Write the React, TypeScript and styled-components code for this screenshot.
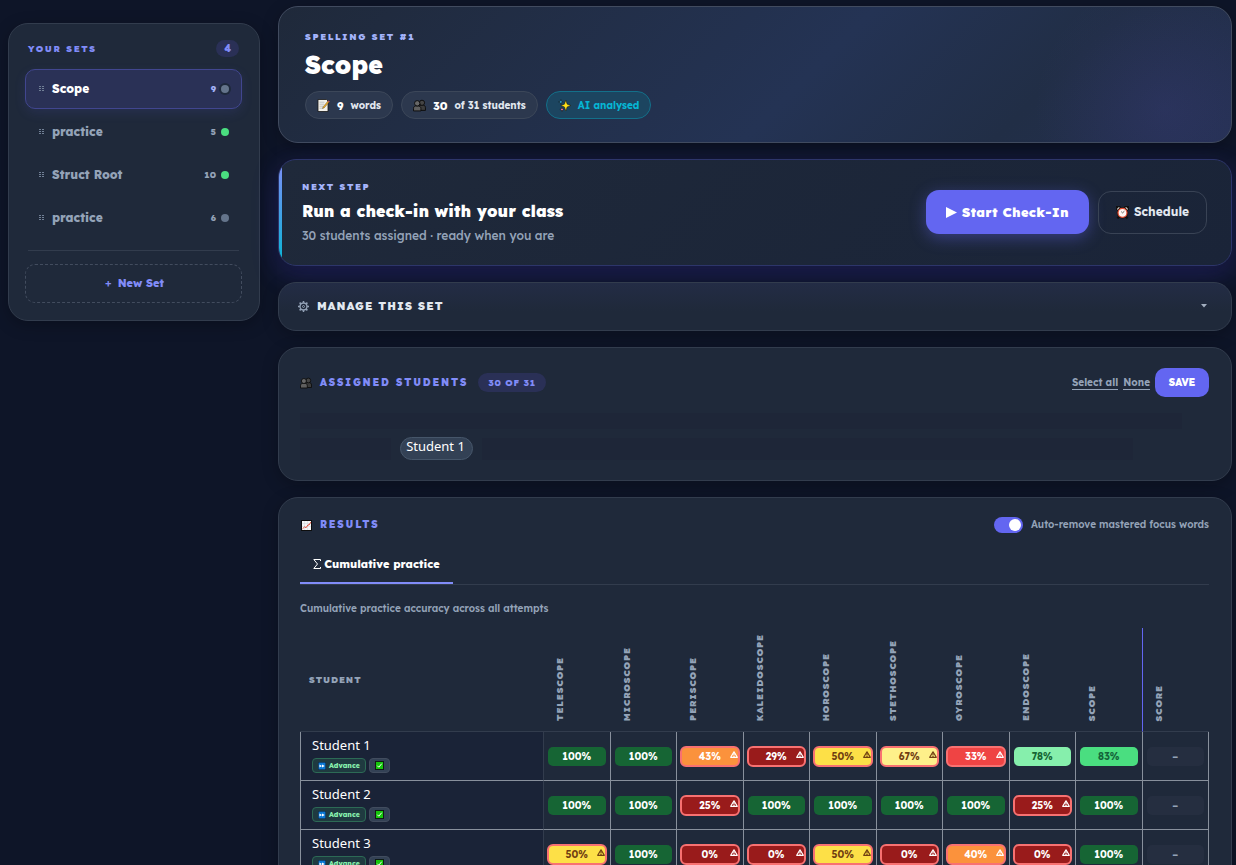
import React from "react";
import styled, { createGlobalStyle, css } from "styled-components";

const GlobalStyle = createGlobalStyle`
  *, *::before, *::after { box-sizing: border-box; }
  html, body { margin: 0; background: #0e1528; }
  body {
    font-family: "Lexend", "Inter", "Liberation Sans", sans-serif;
    color: #fff;
    font-size: 12px;
    line-height: 16px;
  }
  button, input { font: inherit; color: inherit; }
  button { cursor: pointer; margin: 0; }
  h1, h2, h3, p, ul { margin: 0; padding: 0; }
  svg { display: block; flex: none; }
`;

/* ---------- page ---------- */

const Page = styled.div`
  display: grid;
  grid-template-columns: 252px minmax(0, 1fr);
  column-gap: 18px;
  align-items: start;
  height: 100vh;
  overflow: hidden;
  padding: 6px 4px 0 8px;
  background: #0e1528;
`;

const Main = styled.main`
  display: flex;
  flex-direction: column;
  gap: 16px;
`;

const Card = styled.section`
  border: 1px solid #323c4d;
  border-radius: 20px;
  background: #1f293a;
  box-shadow: 0 4px 16px rgba(0, 0, 0, 0.25);
`;

const Row = styled.div<{ $gap?: number }>`
  display: flex;
  align-items: center;
  gap: ${(p) => p.$gap ?? 8}px;
`;

/* ---------- sidebar ---------- */

const Sidebar = styled(Card).attrs({ as: "aside" })`
  margin-top: 17px;
  padding: 16px 17px 17px 16px;
`;

const SidebarHead = styled.div`
  display: flex;
  align-items: center;
  justify-content: space-between;
  padding: 0 3px;
  margin-bottom: 12px;
`;

const Eyebrow = styled.h2<{ $tone?: string }>`
  font-size: 9px;
  line-height: 12px;
  font-weight: 900;
  letter-spacing: 0.18em;
  text-transform: uppercase;
  color: ${(p) => p.$tone ?? "#818cf8"};
`;

const SectionTitle = styled(Eyebrow)`
  font-size: 10px;
`;

const CountBadge = styled.span<{ $wide?: boolean }>`
  display: inline-flex;
  align-items: center;
  height: ${(p) => (p.$wide ? 19 : 17)}px;
  padding: 0 ${(p) => (p.$wide ? 10 : 8)}px;
  border-radius: 10px;
  background: #2a3056;
  color: #818cf8;
  font-size: ${(p) => (p.$wide ? 9 : 10)}px;
  font-weight: 800;
  letter-spacing: ${(p) => (p.$wide ? "0.08em" : "0")};
`;

const SetList = styled.ul`
  list-style: none;
  display: flex;
  flex-direction: column;
  gap: 3px;
`;

const SetItem = styled.button<{ $active?: boolean }>`
  display: flex;
  align-items: center;
  gap: 7px;
  width: 100%;
  height: 40px;
  padding: 0 12px 0 13px;
  border: 1px solid ${(p) => (p.$active ? "#41468f" : "transparent")};
  border-radius: 10px;
  background: ${(p) => (p.$active ? "#2a3156" : "transparent")};
  box-shadow: ${(p) => (p.$active ? "0 4px 12px rgba(99, 102, 241, 0.12)" : "none")};
  color: ${(p) => (p.$active ? "#fff" : "#94a3b8")};
  font-size: 12px;
  font-weight: 800;
  text-align: left;
`;

const SetName = styled.span`
  flex: 1;
`;

const SetCount = styled.span<{ $active?: boolean }>`
  font-size: 9px;
  font-weight: 800;
  color: ${(p) => (p.$active ? "#a5b4fc" : "#94a3b8")};
`;

const Dot = styled.span<{ $on?: boolean; $active?: boolean }>`
  width: 8px;
  height: 8px;
  margin-left: -2px;
  border-radius: 50%;
  background: ${(p) => (p.$on ? "#4ade80" : "#64748b")};
  box-shadow: ${(p) => (p.$active ? "0 0 0 2px #1e293b" : "none")};
`;

const Divider = styled.hr`
  margin: 12px 3px 13px;
  border: 0;
  border-top: 1px solid #323c4d;
`;

const NewSet = styled.button`
  display: flex;
  align-items: center;
  justify-content: center;
  gap: 6px;
  width: 100%;
  height: 39px;
  padding: 0 0 2px 2px;
  border: 1px dashed #424c5e;
  border-radius: 10px;
  background: transparent;
  color: #818cf8;
  font-size: 11px;
  font-weight: 800;
`;

const Plus = styled.span`
  font-weight: 500;
`;

/* ---------- hero ---------- */

const Hero = styled(Card)`
  padding: 24px 26px 23px;
  border-color: #414b5f;
  background:
    radial-gradient(circle at 93% 75%, rgba(99, 80, 210, 0.12), transparent 130px),
    linear-gradient(135deg, #1f293a 0%, #243354 55%, #212e46 78%, #243050 100%);
`;

const HeroTitle = styled.h1`
  margin: 4px 0 8px;
  font-size: 25px;
  line-height: 36px;
  font-weight: 900;
`;

const Stat = styled.span<{ $ai?: boolean }>`
  display: inline-flex;
  align-items: center;
  gap: 7px;
  height: 28px;
  padding: 1px 11px 0;
  border: 1px solid ${(p) => (p.$ai ? "#13708a" : "#3c4759")};
  border-radius: 14px;
  background: ${(p) => (p.$ai ? "#1c4560" : "#2c384e")};
  color: ${(p) => (p.$ai ? "#06b6d4" : "#e2e8f0")};
  font-size: 10px;
  font-weight: 700;
  white-space: nowrap;

  b { font-size: 11px; font-weight: 800; color: #fff; }
`;

/* ---------- next step ---------- */

const NextStep = styled(Card)`
  display: flex;
  align-items: center;
  justify-content: space-between;
  overflow: hidden;
  padding-right: 24px;
  height: 107px;
  border-color: #2d356a;
  border-radius: 18px;
  background: linear-gradient(135deg, #1f293a, #1a2438);
`;

const NextGlow = styled.div`
  border-radius: 18px;
  box-shadow: 0 8px 26px rgba(79, 70, 229, 0.3);
`;

const NextText = styled.div`
  align-self: stretch;
  padding: 21px 0 0 20px;
  border-left: 3px solid;
  border-image: linear-gradient(#818cf8, #06b6d4) 1;
`;

const NextTitle = styled.h3`
  margin: 6px 0 5px;
  font-size: 16px;
  line-height: 24px;
  font-weight: 900;
`;

const Muted = styled.p`
  font-size: 12px;
  line-height: 16px;
  font-weight: 500;
  color: #94a3b8;
`;

const Actions = styled(Row)`
  padding-bottom: 1px;
`;

const buttonBase = css`
  display: inline-flex;
  align-items: center;
  justify-content: center;
  gap: 5px;
  border: 0;
  white-space: nowrap;
`;

const StartButton = styled.button`
  ${buttonBase}
  min-width: 163px;
  height: 44px;
  padding: 0;
  border-radius: 13px;
  background: #6366f1;
  box-shadow: 0 4px 16px rgba(99, 102, 241, 0.4);
  font-size: 13px;
  font-weight: 900;
  letter-spacing: 0.02em;
`;

const ScheduleButton = styled.button`
  ${buttonBase}
  min-width: 109px;
  height: 43px;
  border: 1px solid #394355;
  border-radius: 13px;
  background: transparent;
  color: #e2e8f0;
  font-size: 12px;
  font-weight: 700;
`;

/* ---------- manage ---------- */

const Manage = styled(Card).attrs({ as: "button" })`
  display: flex;
  align-items: center;
  gap: 8px;
  width: 100%;
  height: 49px;
  padding: 0 24px 1px 19px;
  border-radius: 18px;
  background: linear-gradient(#232c45, #1f293a 60%);
`;

const ManageLabel = styled.span`
  flex: 1;
  text-align: left;
  font-size: 11px;
  font-weight: 900;
  letter-spacing: 0.1em;
  text-transform: uppercase;
  color: #e2e8f0;
`;

/* ---------- assigned students ---------- */

const Assigned = styled(Card)`
  padding: 20px 22px 20px 21px;
`;

const CardHead = styled.div`
  display: flex;
  align-items: center;
  justify-content: space-between;
`;

const TextLink = styled.a`
  border-bottom: 1px solid currentColor;
  line-height: 13px;
  font-size: 10px;
  font-weight: 700;
  color: #94a3b8;
  text-decoration: none;
`;

const SaveButton = styled.button`
  ${buttonBase}
  width: 54px;
  height: 29px;
  border-radius: 10px;
  background: #6366f1;
  font-size: 10px;
  font-weight: 900;
`;

const ChipArea = styled.div`
  display: flex;
  flex-direction: column;
  gap: 8px;
  margin-top: 16px;
`;

const ChipRow = styled.div`
  display: flex;
  align-items: center;
  gap: 9px;
  padding-right: 76px;
`;

const Hidden = styled.div<{ $kind: "line" | "short" | "rest" }>`
  background: #1e2638;
  ${(p) => p.$kind === "line" && css`height: 16px; margin-right: 27px;`}
  ${(p) => p.$kind === "short" && css`height: 22px; width: 91px;`}
  ${(p) => p.$kind === "rest" && css`height: 22px; flex: 1;`}
`;

const nameFont = css`
  font-family: "Noto Sans", "Open Sans", sans-serif;
  font-size: 13px;
  line-height: 16px;
  font-weight: 400;
  color: #fff;
`;

const Chip = styled.button`
  ${nameFont}
  width: 73px;
  height: 23px;
  padding: 0 2px 5px 0;
  border: 1px solid #46566a;
  border-radius: 12px;
  background: #334155;
`;

/* ---------- results ---------- */

const Results = styled(Card)`
  padding: 19px 22px 24px 21px;
`;

const SwitchLabel = styled.label`
  display: flex;
  align-items: center;
  gap: 8px;
  font-size: 10px;
  font-weight: 600;
  color: #94a3b8;
`;

const Switch = styled.input`
  appearance: none;
  position: relative;
  width: 29px;
  height: 16px;
  margin: 0;
  border-radius: 8px;
  background: #475569;

  &::after {
    content: "";
    position: absolute;
    top: 2px;
    left: 2px;
    width: 12px;
    height: 12px;
    border-radius: 50%;
    background: #fff;
  }
  &:checked { background: #6366f1; }
  &:checked::after { left: 15px; }
`;

const Tabs = styled.div`
  display: flex;
  margin-top: 12px;
  border-bottom: 1px solid #323c4d;
`;

const Tab = styled.button`
  ${buttonBase}
  gap: 3px;
  min-width: 153px;
  height: 39px;
  padding: 0 13px;
  border-bottom: 2px solid #818cf8;
  background: transparent;
  font-size: 11px;
  font-weight: 800;
`;

const Caption = styled.p`
  margin: 16px 0 11px;
  font-size: 10px;
  line-height: 16px;
  font-weight: 600;
  color: #94a3b8;
`;

const Table = styled.table`
  width: 100%;
  table-layout: fixed;
  border-collapse: separate;
  border-spacing: 0;
`;

const WordHead = styled.th<{ $split?: boolean }>`
  height: 104px;
  padding: 0 0 10px 10px;
  border-bottom: 1px solid #323c4d;
  border-right: ${(p) => (p.$split ? "1px solid #6366f1" : "0")};
  vertical-align: bottom;
  text-align: left;
`;

const Word = styled.span`
  display: block;
  width: 12px;
  writing-mode: vertical-rl;
  transform: rotate(180deg);
  font-size: 9px;
  line-height: 12px;
  font-weight: 900;
  letter-spacing: 0.1em;
  text-transform: uppercase;
  color: #94a3b8;
`;

const StudentHead = styled.th`
  width: 244px;
  padding: 0 0 0 9px;
  border-bottom: 1px solid #323c4d;
  text-align: left;
  vertical-align: middle;
  font-size: 9px;
  line-height: 12px;
  font-weight: 900;
  letter-spacing: 0.1em;
  text-transform: uppercase;
  color: #94a3b8;
`;

const line = "#88909c";

const NameCell = styled.th`
  height: 49px;
  padding: 0 0 2px 11px;
  border-left: 1px solid ${line};
  border-right: 1px solid #323c4d;
  border-bottom: 1px solid ${line};
  background: #1a2337;
  text-align: left;
  vertical-align: middle;
`;

const Name = styled.div`
  ${nameFont}
  margin-bottom: 5px;
`;

const Tag = styled.button<{ $advance?: boolean }>`
  ${buttonBase}
  gap: 3px;
  width: ${(p) => (p.$advance ? 54 : 21)}px;
  height: 15px;
  padding: 0;
  border: 1px solid ${(p) => (p.$advance ? "#2c6a55" : "#414c5e")};
  border-radius: 4px;
  background: ${(p) => (p.$advance ? "#1f3a40" : "#334155")};
  color: #86efac;
  font-size: 7px;
  line-height: 12px;
  font-weight: 800;
`;

const ScoreCell = styled.td`
  padding: 0 4px;
  border-right: 1px solid ${line};
  border-bottom: 1px solid ${line};
  vertical-align: middle;
`;

type Tone = "dark" | "mint" | "green" | "pale" | "yellow" | "orange" | "red" | "crimson" | "none";

const tones: Record<Tone, [string, string]> = {
  dark: ["#166534", "#ffffff"],
  mint: ["#86efac", "#166534"],
  green: ["#4ade80", "#14653a"],
  pale: ["#fef08a", "#713f12"],
  yellow: ["#fde047", "#713f12"],
  orange: ["#fb923c", "#ffffff"],
  red: ["#ef4444", "#ffffff"],
  crimson: ["#991b1b", "#ffffff"],
  none: ["#252e40", "#94a3b8"],
};

const Score = styled.div<{ $tone: Tone; $flag?: boolean }>`
  position: relative;
  display: flex;
  align-items: center;
  justify-content: center;
  height: 19px;
  padding-top: 1px;
  border-radius: 5px;
  background: ${(p) => tones[p.$tone][0]};
  color: ${(p) => tones[p.$tone][1]};
  font-size: 10px;
  font-weight: 700;
  outline: ${(p) => (p.$flag ? "2px solid #f87171" : "none")};
  outline-offset: -1px;
`;

const FlagSpot = styled.span`
  position: absolute;
  top: 4px;
  right: 1px;
`;

/* ---------- icons ---------- */

const Handle = () => (
  <svg width="6" height="6" viewBox="0 0 6 6" fill="#718096" aria-hidden>
    {[0, 2, 4].map((y) => (
      <g key={y}>
        <rect x="0" y={y} width="2" height="1" />
        <rect x="3" y={y} width="2" height="1" />
      </g>
    ))}
  </svg>
);

const Memo = () => (
  <svg width="13" height="13" viewBox="0 0 13 13" aria-hidden>
    <path d="M1 .5h8.500l1.500 1.500v10.500H1z" fill="#f3f1ea" stroke="#161616" strokeWidth=".8" />
    <path d="M2.500 3.200h5M2.500 5.200h4.500M2.500 7.200h3.500M2.500 9.200h3" stroke="#a9adb3" strokeWidth=".7" />
    <path d="M5.500 9.500l.5-1.600 4.800-5.600 1.200 1-4.900 5.600z" fill="#f4b22d" stroke="#3b2b10" strokeWidth=".4" />
    <path d="M10.800 2.300l.7-.8 1.200 1-.7.8z" fill="#e5586a" />
  </svg>
);

const People = ({ size = 12 }: { size?: number }) => (
  <svg width={size} height={size} viewBox="0 0 12 12" aria-hidden>
    <g stroke="#0d0d0d" strokeWidth=".9">
      <path d="M5.500 10.500V8C5.500 6.300 6.500 5.500 8.500 5.500s3 1 3 2.500v2.500z" fill="#3c3c3c" />
      <circle cx="8.300" cy="3.500" r="2.400" fill="#454545" />
      <path d="M.5 11V8.700C.5 7 1.600 6.300 3.800 6.300S7.300 7 7.300 8.700V11z" fill="#5f5f5f" />
      <circle cx="3.900" cy="4" r="2.500" fill="#686868" />
    </g>
  </svg>
);

const Sparkles = () => (
  <svg width="13" height="13" viewBox="0 0 13 13" stroke="#111" strokeWidth=".5" aria-hidden>
    <path d="M7.800 1.200l1.400 4 3.600 1.300-3.600 1.400-1.400 4-1.400-4L2.800 6.500l3.600-1.300z" fill="#ffe11a" />
    <path d="M2.800.5l.7 1.800 1.600.6-1.600.7-.7 1.800-.6-1.800L.5 2.900l1.700-.6z" fill="#35b6ea" />
    <path d="M4 8.300l.6 1.500 1.500.6-1.500.6L4 12.500l-.6-1.500-1.500-.6 1.500-.6z" fill="#ef7fb0" />
  </svg>
);

const Alarm = () => (
  <svg width="13" height="13" viewBox="0 0 13 13" aria-hidden>
    <path d="M1 4V1h3.500M12 4V1H8.500M3 10.500l-1.500 2M10 10.500l1.500 2" stroke="#111" strokeWidth="2.200" fill="none" />
    <path d="M1.400 3.400l2-1.800M11.600 3.400l-2-1.800" stroke="#e8e2dc" strokeWidth="1.300" />
    <circle cx="6.500" cy="6.800" r="4.700" fill="#fff4ef" stroke="#111" strokeWidth="2" />
    <circle cx="6.500" cy="6.800" r="4.500" fill="#fff7f4" stroke="#e2492f" strokeWidth="1.200" />
    <path d="M6.500 6.900l1.900-1.700M6.500 6.900L5.200 5.600" stroke="#444" strokeWidth=".8" />
  </svg>
);

const ChartUp = () => (
  <svg width="12" height="11" viewBox="-1 0 12 11" aria-hidden>
    <rect x=".5" y=".5" width="10" height="10" fill="#f5f5f5" stroke="#0d0d0d" />
    <path d="M3.500 1v9M6.500 1v9M1 3.500h9M1 6.500h9" stroke="#cfd6da" strokeWidth=".5" />
    <path d="M1.500 8.800l2.200-2 1.300 1 2-3 1 .3 1.800-3" fill="none" stroke="#e5543f" strokeWidth="1" />
  </svg>
);

const Gear = () => (
  <svg width="11" height="11" viewBox="0 0 11 11" fill="none" stroke="#94a3b8" aria-hidden>
    <circle cx="5.500" cy="5.500" r="3.500" strokeWidth="1.400" />
    <circle cx="5.500" cy="5.500" r="1" strokeWidth="1" />
    <path
      d="M5.500 0v1.800M5.500 9.200V11M0 5.500h1.800M9.200 5.500H11M1.600 1.600l1.300 1.300M8.100 8.100l1.300 1.300M9.400 1.600L8.100 2.900M2.900 8.100L1.600 9.400"
      strokeWidth="1.500"
    />
  </svg>
);

const Play = () => (
  <svg width="11" height="11" viewBox="0 0 11 11" fill="#fff" aria-hidden>
    <path d="M0 0l11 5.500L0 11z" />
  </svg>
);

const Caret = () => (
  <svg width="6" height="4" viewBox="0 0 6 4" fill="#a3afc0" aria-hidden>
    <path d="M0 0h6L3 3.500z" />
  </svg>
);

const Sigma = () => (
  <svg width="8" height="10" viewBox="0 0 8 10" fill="none" stroke="#fff" aria-hidden>
    <path d="M7.500 2V.5H.8L4.500 5 .8 9.500h6.700V8" />
  </svg>
);

const FastForward = () => (
  <svg width="8" height="8" viewBox="0 0 8 8" aria-hidden>
    <rect x=".25" y=".25" width="7.500" height="7.500" fill="#0a78d4" stroke="#10243c" strokeWidth=".5" />
    <path d="M1.400 2.500L4 4 1.400 5.500zM4 2.500L6.800 4 4 5.500z" fill="#fff" />
  </svg>
);

const Check = () => (
  <svg width="9" height="9" viewBox="0 0 9 9" aria-hidden>
    <rect x=".5" y=".5" width="8" height="8" fill="#16c60c" stroke="#0f1c14" />
    <path d="M2.300 4.700L3.800 6.200 6.700 2.700" fill="none" stroke="#fff" strokeWidth="1" />
  </svg>
);

const Warning = () => (
  <svg width="8" height="7" viewBox="0 0 8 7" fill="none" stroke="currentColor" aria-label="Needs attention">
    <path d="M4 .8L7.300 6.300H.7z" strokeWidth="1.200" strokeLinejoin="round" />
    <path d="M4 2v2.600M4 5v1" strokeWidth="1.200" />
  </svg>
);

/* ---------- data ---------- */

const sets = [
  { name: "Scope", count: 9, on: false, active: true },
  { name: "practice", count: 5, on: true },
  { name: "Struct Root", count: 10, on: true },
  { name: "practice", count: 6, on: false },
];

const words = [
  "Telescope", "Microscope", "Periscope", "Kaleidoscope", "Horoscope",
  "Stethoscope", "Gyroscope", "Endoscope", "Scope", "Score",
];

type Result = [string, Tone, boolean?];
const full: Result = ["100%", "dark"];
const zero: Result = ["0%", "crimson", true];
const blank: Result = ["–", "none"];

const students: { name: string; results: Result[] }[] = [
  {
    name: "Student 1",
    results: [
      full, full, ["43%", "orange", true], ["29%", "crimson", true], ["50%", "yellow", true],
      ["67%", "pale", true], ["33%", "red", true], ["78%", "mint"], ["83%", "green"], blank,
    ],
  },
  {
    name: "Student 2",
    results: [full, full, ["25%", "crimson", true], full, full, full, full, ["25%", "crimson", true], full, blank],
  },
  {
    name: "Student 3",
    results: [
      ["50%", "yellow", true], full, zero, zero, ["50%", "yellow", true],
      zero, ["40%", "orange", true], zero, full, blank,
    ],
  },
];

/* ---------- app ---------- */

export default function App() {
  return (
    <>
      <GlobalStyle />
      <Page>
        <Sidebar>
          <SidebarHead>
            <Eyebrow>Your sets</Eyebrow>
            <CountBadge>4</CountBadge>
          </SidebarHead>
          <SetList>
            {sets.map((s, i) => (
              <li key={i}>
                <SetItem $active={s.active}>
                  <Handle />
                  <SetName>{s.name}</SetName>
                  <SetCount $active={s.active}>{s.count}</SetCount>
                  <Dot $on={s.on} $active={s.active} />
                </SetItem>
              </li>
            ))}
          </SetList>
          <Divider />
          <NewSet>
            <Plus>+</Plus>
            <span>New Set</span>
          </NewSet>
        </Sidebar>

        <Main>
          <Hero>
            <Eyebrow $tone="#a5b4fc">Spelling set #1</Eyebrow>
            <HeroTitle>Scope</HeroTitle>
            <Row>
              <Stat><Memo /><b>9</b> words</Stat>
              <Stat><People size={13} /><b>30</b> of 31 students</Stat>
              <Stat $ai><Sparkles />AI analysed</Stat>
            </Row>
          </Hero>

          <NextGlow>
            <NextStep>
              <NextText>
                <Eyebrow $tone="#a5b4fc">Next step</Eyebrow>
                <NextTitle>Run a check-in with your class</NextTitle>
                <Muted>30 students assigned · ready when you are</Muted>
              </NextText>
              <Actions $gap={9}>
                <StartButton><Play />Start Check-In</StartButton>
                <ScheduleButton><Alarm />Schedule</ScheduleButton>
              </Actions>
            </NextStep>
          </NextGlow>

          <Manage>
            <Gear />
            <ManageLabel>Manage this set</ManageLabel>
            <Caret />
          </Manage>

          <Assigned>
            <CardHead>
              <Row $gap={10}>
                <Row>
                  <People />
                  <SectionTitle>Assigned students</SectionTitle>
                </Row>
                <CountBadge $wide>30 OF 31</CountBadge>
              </Row>
              <Row $gap={5}>
                <TextLink href="#all">Select all</TextLink>
                <TextLink href="#none">None</TextLink>
                <SaveButton>SAVE</SaveButton>
              </Row>
            </CardHead>
            <ChipArea>
              <Hidden $kind="line" />
              <ChipRow>
                <Hidden $kind="short" />
                <Chip>Student 1</Chip>
                <Hidden $kind="rest" />
              </ChipRow>
            </ChipArea>
          </Assigned>

          <Results>
            <CardHead>
              <Row>
                <ChartUp />
                <SectionTitle>Results</SectionTitle>
              </Row>
              <SwitchLabel>
                <Switch type="checkbox" defaultChecked />
                Auto-remove mastered focus words
              </SwitchLabel>
            </CardHead>
            <Tabs>
              <Tab><Sigma />Cumulative practice</Tab>
            </Tabs>
            <Caption>Cumulative practice accuracy across all attempts</Caption>
            <Table>
              <thead>
                <tr>
                  <StudentHead scope="col">Student</StudentHead>
                  {words.map((w) => (
                    <WordHead key={w} scope="col" $split={w === "Scope"}>
                      <Word>{w}</Word>
                    </WordHead>
                  ))}
                </tr>
              </thead>
              <tbody>
                {students.map((s) => (
                  <tr key={s.name}>
                    <NameCell scope="row">
                      <Name>{s.name}</Name>
                      <Row $gap={3}>
                        <Tag $advance><FastForward />Advance</Tag>
                        <Tag aria-label="Mark complete"><Check /></Tag>
                      </Row>
                    </NameCell>
                    {s.results.map(([value, tone, flag], i) => (
                      <ScoreCell key={i}>
                        <Score $tone={tone} $flag={flag}>
                          {value}
                          {flag && <FlagSpot><Warning /></FlagSpot>}
                        </Score>
                      </ScoreCell>
                    ))}
                  </tr>
                ))}
              </tbody>
            </Table>
          </Results>
        </Main>
      </Page>
    </>
  );
}
